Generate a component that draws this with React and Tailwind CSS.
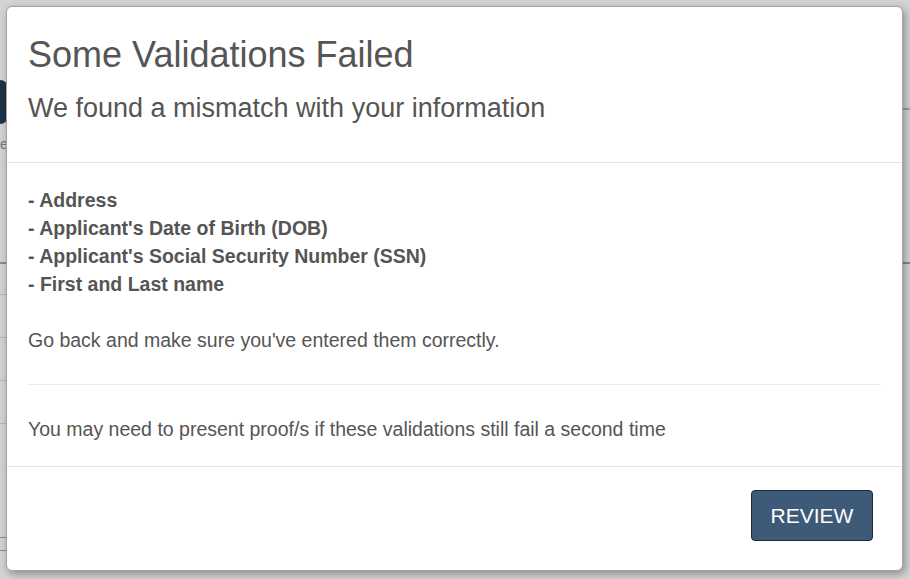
import React from "react";

const fields = [
  "Address",
  "Applicant's Date of Birth (DOB)",
  "Applicant's Social Security Number (SSN)",
  "First and Last name",
];

// page behind the dimmed overlay, only its edges show
function Backdrop() {
  return (
    <div className="absolute inset-0 flex flex-col">
      <div className="h-[80px]" />
      <div className="h-[44px] w-[8px] rounded-r-full bg-[#1f3347]" />
      <div className="h-[2px] ml-auto w-[8px] bg-[#a0a0a0] -mt-[16px]" />
      <div className="pl-0 pt-[26px] text-[14px] leading-[16px] text-[#777]">e</div>
      <div className="h-[110px]" />
      <div className="h-[2px] bg-[#8a8a8a]" />
      <div className="flex flex-col gap-[42px] pt-[30px]">
        <div className="w-[10px] h-px bg-[#b8b8b8]" />
        <div className="w-[10px] h-px bg-[#b8b8b8]" />
        <div className="w-[10px] h-px bg-[#b8b8b8]" />
        <div className="w-[10px] h-px bg-[#b8b8b8]" />
      </div>
      <div className="mt-auto mb-[28px] w-[6px] h-[14px] border-y border-[#5aa58a]" />
    </div>
  );
}

export default function App() {
  return (
    <div className="relative w-[910px] h-[579px] overflow-hidden bg-[#d4d4d4] font-['Liberation_Sans',Arial,sans-serif] text-[#555]">
      <Backdrop />
      <div className="absolute left-[6px] top-[6px] w-[897px] h-[565px] bg-white rounded-[6px] border border-[#a3a3a3] shadow-[2px_3px_8px_rgba(0,0,0,0.35)] flex flex-col">
        <div className="h-[156px] border-b border-[#e2e2e2] px-[21px] pt-[28px] flex flex-col gap-[17px]">
          <h1 className="text-[36px] leading-[40px]">Some Validations Failed</h1>
          <h2 className="text-[27px] leading-[32px]">We found a mismatch with your information</h2>
        </div>

        <div className="flex-1 px-[21px] pt-[23px] flex flex-col">
          <ul className="text-[19.5px] leading-[28px] font-bold">
            {fields.map((f) => (
              <li key={f}>- {f}</li>
            ))}
          </ul>
          <p className="mt-[28px] text-[19.5px] leading-[28px]">Go back and make sure you've entered them correctly.</p>
          <div className="mt-[30px] border-t border-[#ececec]" />
          <p className="mt-[30px] text-[19.5px] leading-[28px]">You may need to present proof/s if these validations still fail a second time</p>
        </div>

        <div className="h-[104px] border-t border-[#e2e2e2] flex justify-end items-start pt-[23px] pr-[29px]">
          <button className="w-[122px] h-[51px] rounded-[4px] bg-[#3d5a79] border border-[#1c2c3c] text-white text-[21px]">
            REVIEW
          </button>
        </div>
      </div>
    </div>
  );
}
